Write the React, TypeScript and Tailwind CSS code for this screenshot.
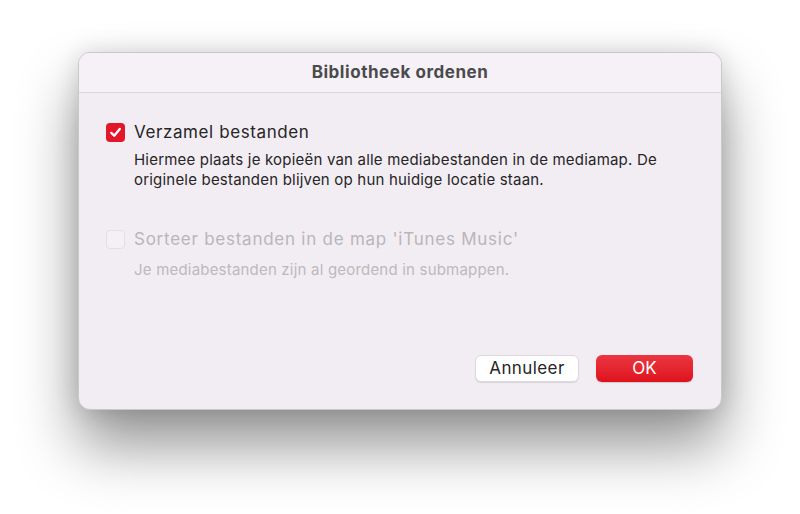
import React from "react";

export default function App() {
  return (
    <div
      className="w-[800px] h-[514px] bg-white flex justify-center pt-[52px]"
      style={{ fontFamily: "Inter, 'Noto Sans', 'Liberation Sans', sans-serif" }}
    >
      <div className="w-[644px] h-[358px] rounded-[12px] bg-[#f2edf2] border border-[#cbc7cc] shadow-[0_36px_60px_rgba(0,0,0,0.42),0_0_24px_rgba(0,0,0,0.14)] flex flex-col overflow-hidden">
        <div className="h-[40px] shrink-0 bg-[#f6f1f6] border-b border-[#dcd7dc] flex items-center justify-center">
          <span className="text-[17px] font-bold text-[#4b4a4c] tracking-[0.55px]">Bibliotheek ordenen</span>
        </div>
        <div className="flex flex-col pl-[27px] pr-[20px] pt-[28px] flex-1">
          <div className="flex items-center gap-[9px]">
            <div className="w-[19px] h-[19px] rounded-[4px] bg-[#e2182a] flex items-center justify-center">
              <svg width="13" height="13" viewBox="0 0 13 13">
                <path d="M2.3 6.9 L5.2 9.8 L10.8 3" fill="none" stroke="white" strokeWidth="2.3" strokeLinecap="round" strokeLinejoin="round" />
              </svg>
            </div>
            <span className="text-[17px] text-[#262527] leading-[22px] tracking-[0.6px]">Verzamel bestanden</span>
          </div>
          <div className="pl-[28px] mt-[7px] text-[15px] leading-[20px] text-[#262527] tracking-[0.2px] whitespace-nowrap">
            <div>Hiermee plaats je kopieën van alle mediabestanden in de mediamap. De</div>
            <div>originele bestanden blijven op hun huidige locatie staan.</div>
          </div>
          <div className="flex items-center gap-[9px] mt-[38px]">
            <div className="w-[19px] h-[19px] rounded-[4px] bg-[#f4f1f4] border border-[#e3dfe3]"></div>
            <span className="text-[17px] text-[#b9b6ba] leading-[22px] tracking-[0.75px]">Sorteer bestanden in de map 'iTunes Music'</span>
          </div>
          <div className="pl-[28px] mt-[10px] text-[15px] leading-[20px] text-[#bcb9bd] tracking-[0.2px] whitespace-nowrap">
            Je mediabestanden zijn al geordend in submappen.
          </div>
          <div className="flex-1"></div>
          <div className="flex justify-end gap-[17px] pb-[27px] pr-[8px]">
            <button className="w-[104px] h-[27px] rounded-[6px] bg-white border border-[#dcd8dc] shadow-[0_1px_1px_rgba(0,0,0,0.1)] text-[17px] text-[#262527] tracking-[0.4px] flex items-center justify-center">
              Annuleer
            </button>
            <button className="w-[97px] h-[27px] rounded-[6px] bg-gradient-to-b from-[#ea3540] to-[#df0f1b] shadow-[0_1px_1px_rgba(0,0,0,0.15)] text-[17px] text-white flex items-center justify-center">
              OK
            </button>
          </div>
        </div>
      </div>
    </div>
  );
}
